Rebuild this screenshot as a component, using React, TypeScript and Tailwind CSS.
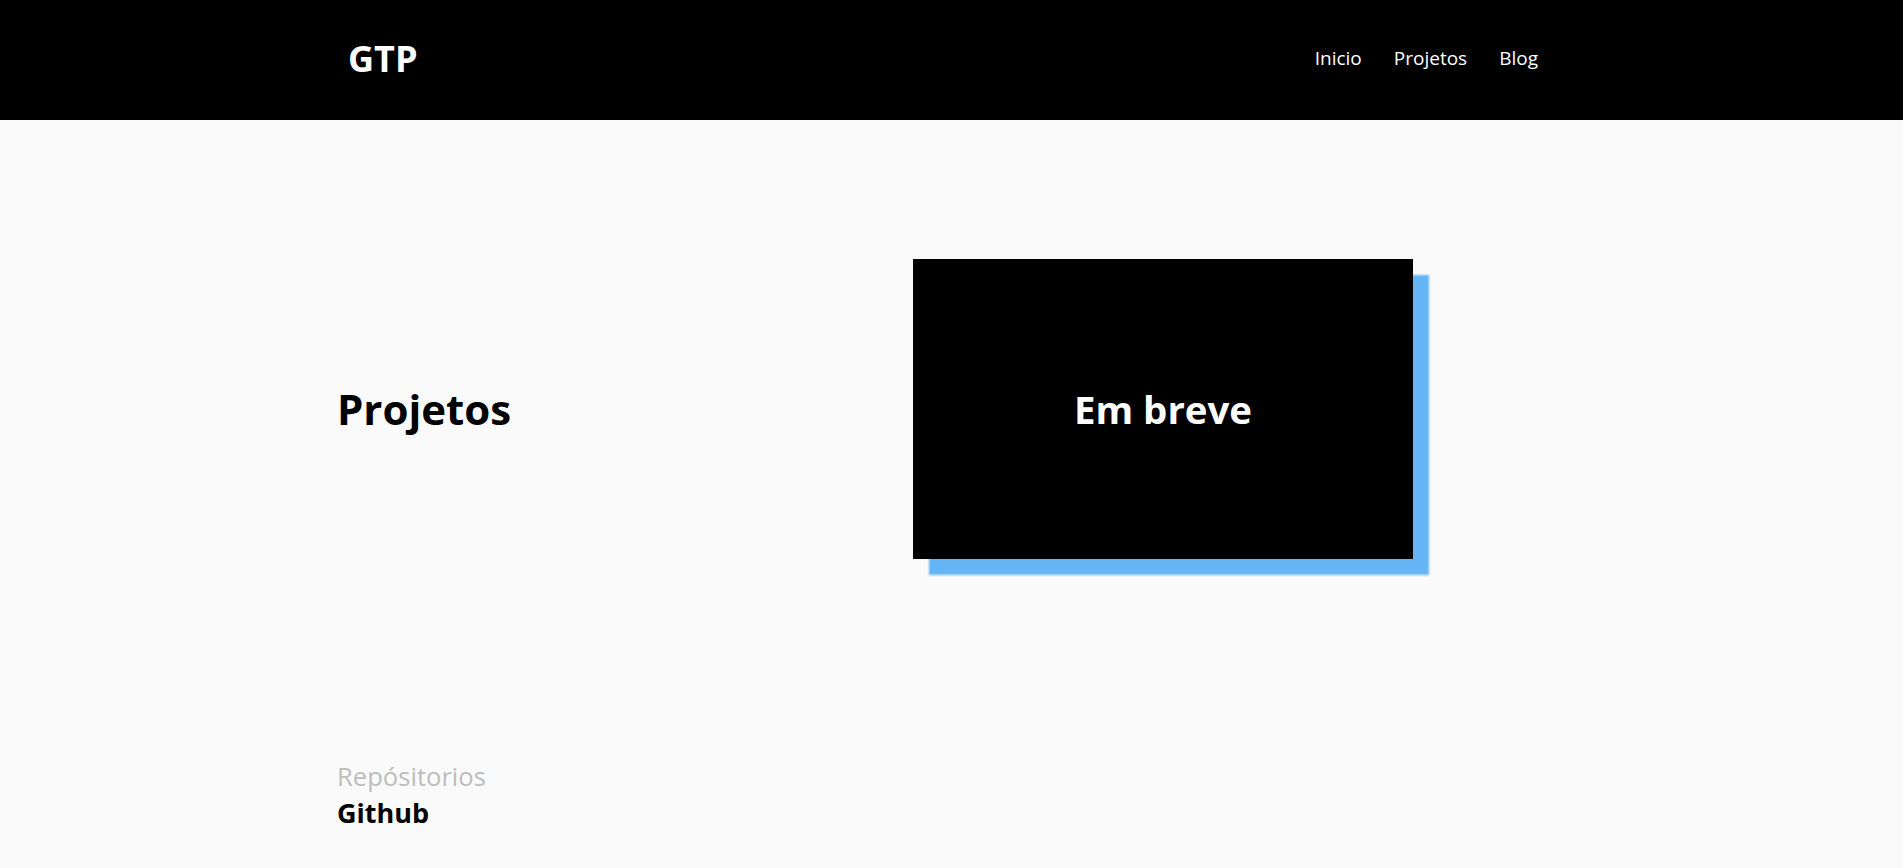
export default function App() {
  return (
    <div className="min-h-screen bg-[#fafafa] font-['Open_Sans',sans-serif]">
      <header className="h-[120px] bg-black flex items-center justify-between pl-[348px] pr-[365px]">
        <div className="text-white font-bold text-[36px] leading-none pb-[2px]">GTP</div>
        <nav className="flex gap-[32px] text-white text-[19px] pb-[4px]">
          <a>Inicio</a>
          <a>Projetos</a>
          <a>Blog</a>
        </nav>
      </header>
      <main className="pl-[337px]">
        <section className="flex items-center pt-[139px]">
          <h1 className="w-[576px] text-[42px] font-bold text-black leading-none">Projetos</h1>
          <div className="w-[500px] h-[300px] bg-black flex items-center justify-center shadow-[16px_16px_2px_#64b5f6]">
            <span className="text-white font-bold text-[38.4px] leading-none">Em breve</span>
          </div>
        </section>
        <section className="pt-[200px]">
          <p className="text-[25.6px] leading-[36px] text-[#bdbdbd]">Repósitorios</p>
          <p className="text-[27px] leading-[36px] font-bold text-black">Github</p>
        </section>
      </main>
    </div>
  );
}
